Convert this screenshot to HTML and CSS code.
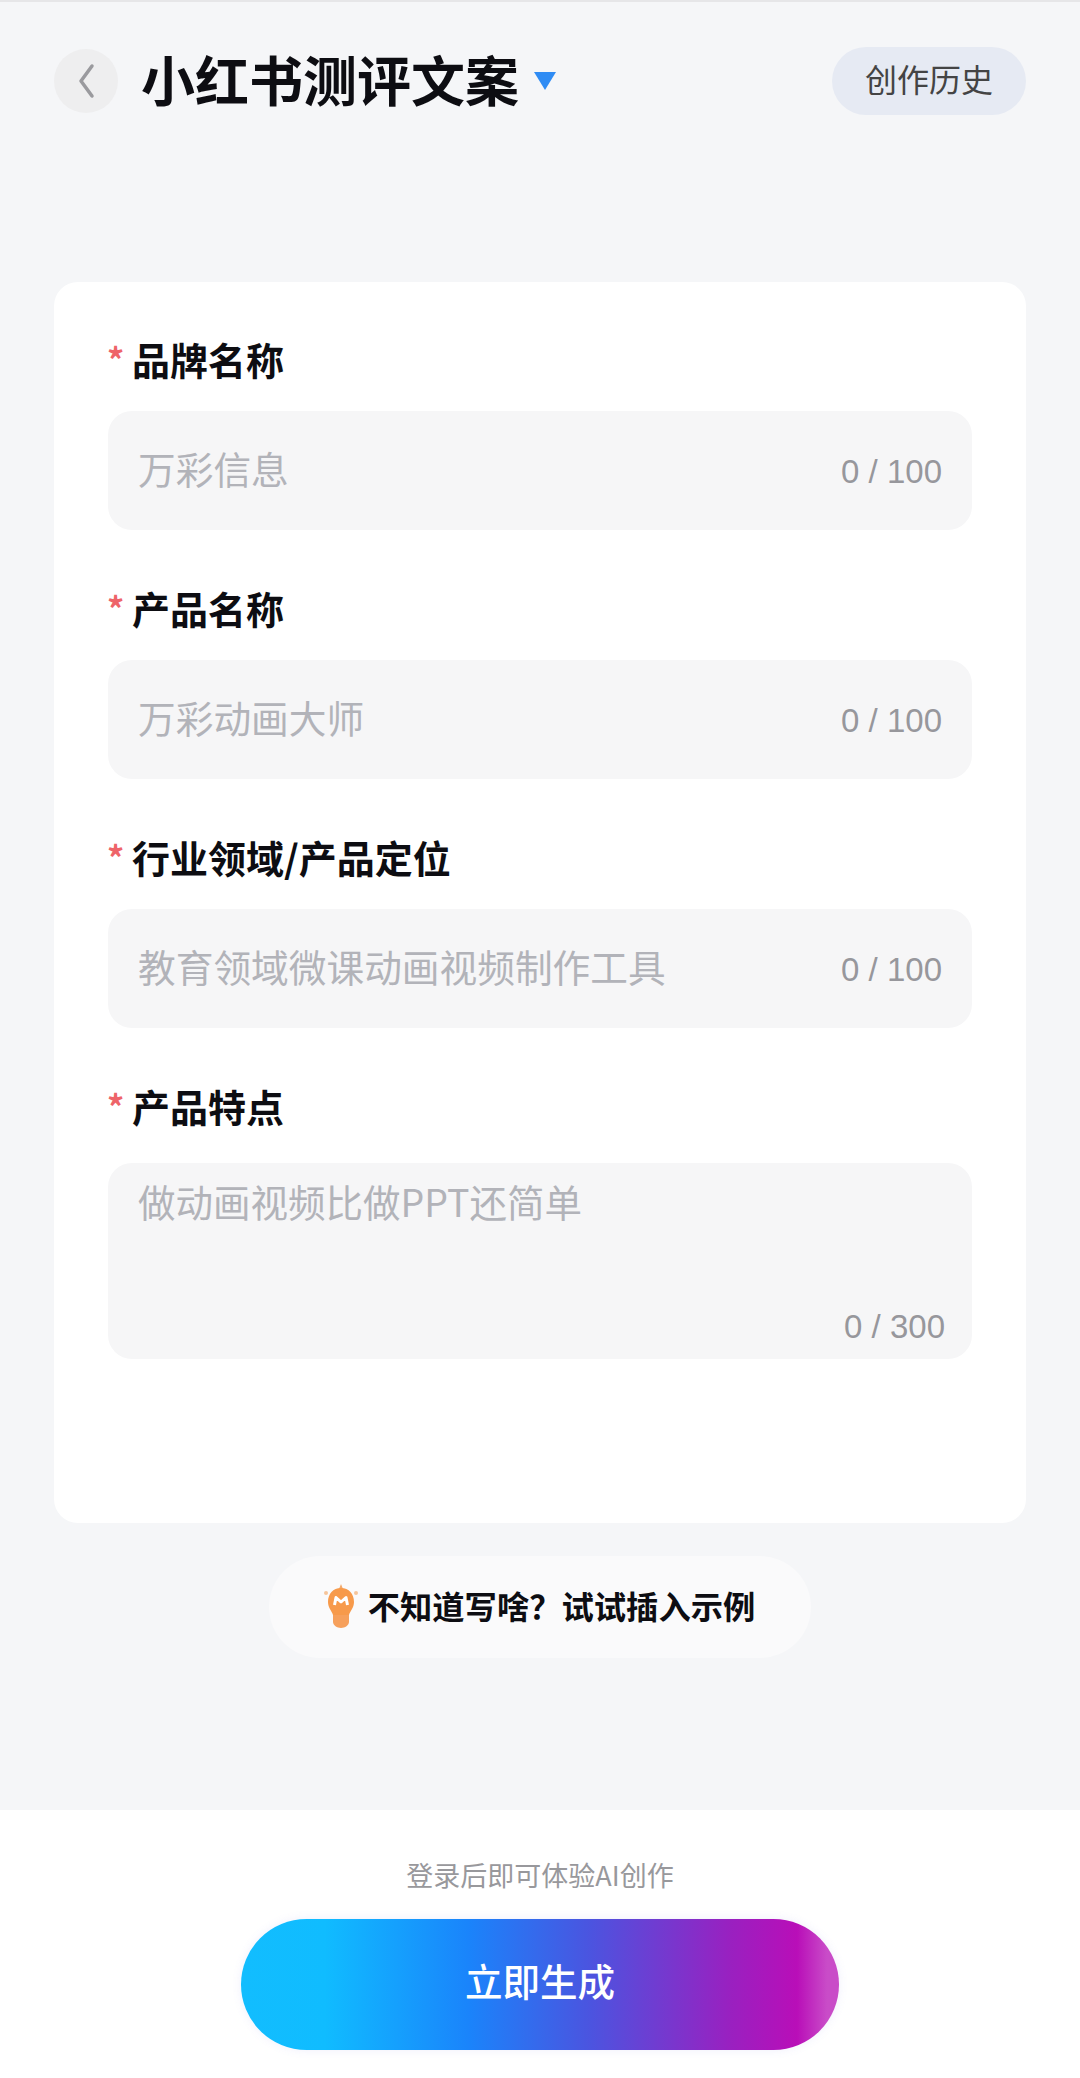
FILE: index.html
```html
<!DOCTYPE html>
<html lang="zh-CN">
<head>
<meta charset="utf-8" />
<title>小红书测评文案</title>
<link rel="stylesheet" href="styles.css">
</head>
<body>
<div class="page">
  <header class="header">
    <div class="headerLeft">
      <button class="backBtn" type="button">
        <svg width="18" height="36" viewBox="0 0 18 36"><path d="M15 3 L4 18 L15 33" fill="none" stroke="#9a9a9e" stroke-width="3.5" stroke-linecap="round" stroke-linejoin="round"/></svg>
      </button>
      <h1 class="title">小红书测评文案</h1>
      <span class="caret"></span>
    </div>
    <button class="historyBtn" type="button">创作历史</button>
  </header>

  <form class="card">
    <div class="field">
      <label class="label"><span class="star">*</span>品牌名称</label>
      <div class="inputBox">
        <input class="textInput" type="text" placeholder="万彩信息" />
        <span class="count">0 / 100</span>
      </div>
    </div>
    <div class="field">
      <label class="label"><span class="star">*</span>产品名称</label>
      <div class="inputBox">
        <input class="textInput" type="text" placeholder="万彩动画大师" />
        <span class="count">0 / 100</span>
      </div>
    </div>
    <div class="field">
      <label class="label"><span class="star">*</span>行业领域/产品定位</label>
      <div class="inputBox">
        <input class="textInput" type="text" placeholder="教育领域微课动画视频制作工具" />
        <span class="count">0 / 100</span>
      </div>
    </div>
    <div class="field">
      <label class="label"><span class="star">*</span>产品特点</label>
      <div class="areaBox">
        <textarea class="textArea" placeholder="做动画视频比做PPT还简单"></textarea>
        <span class="count areaCount">0 / 300</span>
      </div>
    </div>
  </form>

  <div class="exampleRow">
    <button class="exampleBtn" type="button">
      <svg class="bulb" width="36" height="44" viewBox="0 0 36 44">
        <path d="M18 0 L20 5 L16 5 Z" fill="#f3a96b"/>
        <circle cx="3" cy="9" r="2" fill="#f6c49a"/>
        <circle cx="33" cy="9" r="2" fill="#f6c49a"/>
        <path d="M18 4 C26 4 31 10 31 18 C31 24 27 27 26 31 L10 31 C9 27 5 24 5 18 C5 10 10 4 18 4 Z" fill="#f79a4b"/>
        <path d="M10 31 H26 V38 C26 41 22 44 18 44 C14 44 10 41 10 38 Z" fill="#f6a05c"/>
        <path d="M11.5 21 L13 13.5 L18 18 L23 13.5 L24.5 21" fill="none" stroke="#fff" stroke-width="3" stroke-linejoin="round"/>
      </svg>
      <span class="exampleText">不知道写啥？试试插入示例</span>
    </button>
  </div>

  <footer class="footer">
    <p class="hint">登录后即可体验AI创作</p>
    <button class="generateBtn" type="button">立即生成</button>
  </footer>
</div>
</body>
</html>
```

FILE: styles.css
```css
* {
  box-sizing: border-box;
}

body {
  margin: 0;
  padding: 0;
  background-color: #f5f6f8;
  font-family: "Noto Sans CJK SC", "Noto Sans", sans-serif;
}

button {
  border: none;
  font-family: inherit;
  padding: 0;
}

.page {
  display: flex;
  flex-direction: column;
  height: 2078px;
  border-top: 2px solid #e6e6e8;
  overflow: hidden;
}

.header {
  display: flex;
  justify-content: space-between;
  align-items: center;
  height: 70px;
  margin-top: 44px;
  padding: 0 54px;
}

.headerLeft {
  display: flex;
  align-items: center;
}

.backBtn {
  display: flex;
  justify-content: center;
  align-items: center;
  width: 64px;
  height: 64px;
  border-radius: 50%;
  background-color: #eeeeef;
}

.title {
  margin: 0 0 0 23px;
  padding-bottom: 5px;
  font-size: 54px;
  line-height: 65px;
  font-weight: 700;
  color: #0d0d12;
}

.caret {
  width: 0;
  height: 0;
  margin-left: 15px;
  border-left: 11px solid transparent;
  border-right: 11px solid transparent;
  border-top: 18px solid #2f8cf4;
}

.historyBtn {
  width: 194px;
  height: 68px;
  padding-bottom: 6px;
  border-radius: 34px;
  background-color: #e6eaf3;
  color: #444;
  font-size: 32px;
}

.card {
  height: 1241px;
  margin: 166px 54px 0;
  padding: 53px 54px 0;
  border-radius: 24px;
  background-color: #fff;
}

.field {
  margin-bottom: 54px;
}

.label {
  display: flex;
  align-items: center;
  height: 50px;
  margin-bottom: 26px;
  padding-bottom: 4px;
  font-size: 38px;
  font-weight: 700;
  color: #0d0d12;
}

.star {
  width: 25px;
  margin-left: -1px;
  color: #ee6469;
  font-size: 34px;
  font-weight: 700;
}

.inputBox {
  display: flex;
  align-items: center;
  height: 119px;
  padding: 0 30px;
  border-radius: 24px;
  background-color: #f6f6f7;
}

.textInput {
  flex: 1;
  min-width: 0;
  border: none;
  outline: none;
  background: transparent;
  padding: 0 0 6px;
  font-family: inherit;
  font-size: 37.7px;
  color: #333;
}

.textInput::placeholder,
.textArea::placeholder {
  color: #b2b3b9;
  opacity: 1;
}

.count {
  padding-top: 2px;
  font-family: "Liberation Sans", sans-serif;
  font-size: 33px;
  color: #97979c;
  white-space: nowrap;
}

.areaBox {
  position: relative;
  height: 196px;
  margin-top: 31px;
  border-radius: 24px;
  background-color: #f6f6f7;
}

.textArea {
  display: block;
  width: 100%;
  height: 100%;
  padding: 11px 30px;
  border: none;
  outline: none;
  resize: none;
  background: transparent;
  font-family: inherit;
  font-size: 37.5px;
  line-height: 54px;
  color: #333;
}

.areaCount {
  position: absolute;
  right: 27px;
  bottom: 13px;
}

.exampleRow {
  display: flex;
  justify-content: center;
  margin-top: 33px;
}

.exampleBtn {
  display: flex;
  justify-content: center;
  align-items: center;
  gap: 9px;
  width: 542px;
  height: 102px;
  padding: 0 2px 2px 0;
  border-radius: 51px;
  background-color: #fafafb;
  color: #0d0d12;
  font-size: 32.3px;
  font-weight: 700;
}

.exampleText {
  padding-bottom: 2px;
}

.footer {
  display: flex;
  flex-direction: column;
  align-items: center;
  margin-top: auto;
  height: 268px;
  padding-top: 45px;
  background-color: #fff;
}

.hint {
  margin: 0;
  font-size: 27px;
  line-height: 40px;
  color: #98989c;
}

.generateBtn {
  width: 598px;
  height: 131px;
  margin-top: 24px;
  padding-bottom: 10px;
  border-radius: 66px;
  background: linear-gradient(90deg, #12bdfe 0%, #10bcff 14%, #1a84fb 38%, #4a55e0 58%, #9a20c0 82%, #b90eb8 93%, #c94cc8 98%);
  box-shadow: 0 0 10px rgba(120, 120, 230, 0.12);
  color: #fff;
  font-size: 37.5px;
  font-weight: 500;
}
```
